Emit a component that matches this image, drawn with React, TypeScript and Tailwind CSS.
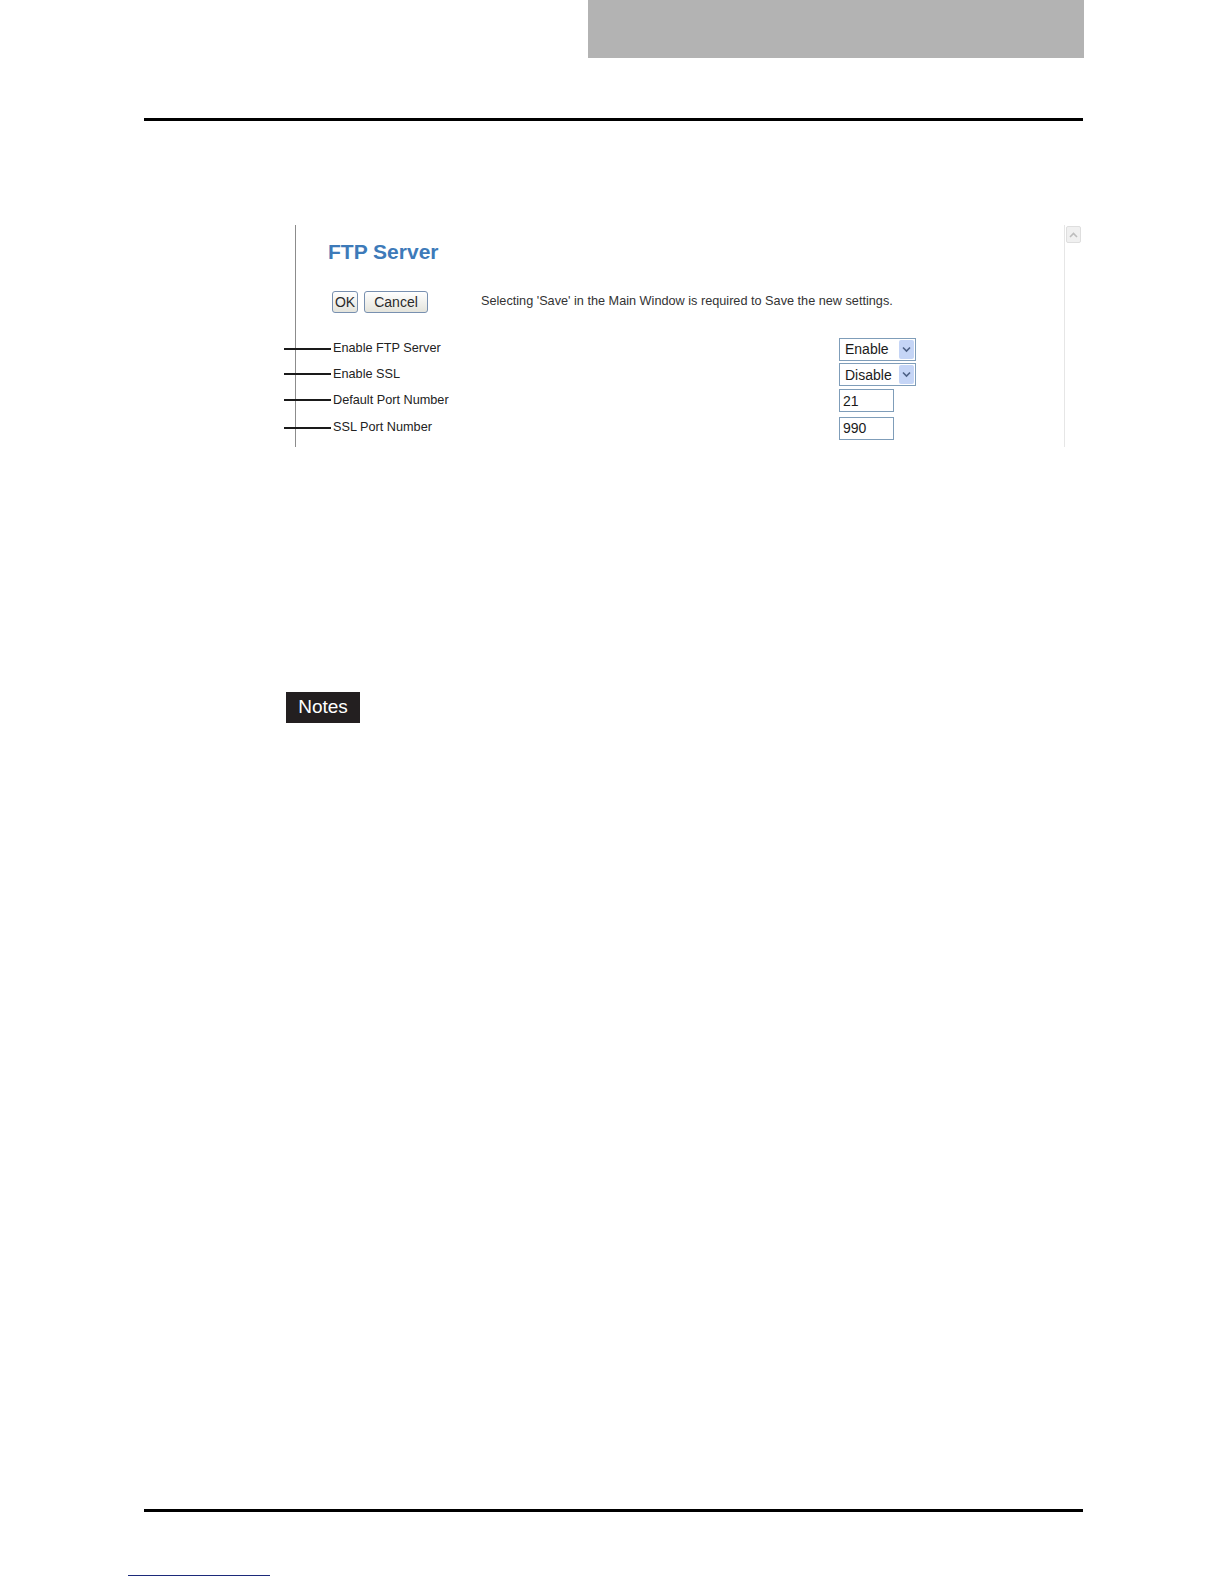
import React from 'react';

const font = { fontFamily: '"Liberation Sans", Arial, sans-serif' };

interface Row {
  label: string;
  h: string;
  kind: 'select' | 'input';
  value: string;
}

const rows: Row[] = [
  { label: 'Enable FTP Server', h: 'h-[26px]', kind: 'select', value: 'Enable' },
  { label: 'Enable SSL', h: 'h-[25px]', kind: 'select', value: 'Disable' },
  { label: 'Default Port Number', h: 'h-[27px]', kind: 'input', value: '21' },
  { label: 'SSL Port Number', h: 'h-[28px]', kind: 'input', value: '990' },
];

const SelectBox: React.FC<{ value: string }> = ({ value }) => (
  <div className="flex h-[23px] w-[77px] items-center border border-[#7f9db9] bg-white">
    <span className="flex-1 pl-[5px] text-[14px] leading-none text-[#1a1a1a]">{value}</span>
    <span className="mr-[1px] flex h-[19px] w-[15px] items-center justify-center rounded-[2px] bg-[#c5d5f6]">
      <svg width="9" height="7" viewBox="0 0 9 7">
        <path d="M1 1.5 L4.5 5 L8 1.5" fill="none" stroke="#4d6185" strokeWidth="1.6" />
      </svg>
    </span>
  </div>
);

const InputBox: React.FC<{ value: string }> = ({ value }) => (
  <div className="flex h-[23px] w-[55px] items-center border border-[#7f9db9] bg-white pl-[3px] text-[14px] leading-none text-[#1a1a1a]">
    {value}
  </div>
);

const FormButton: React.FC<{ children: React.ReactNode; w: string }> = ({ children, w }) => (
  <div
    className={`${w} flex h-[22px] items-center justify-center rounded-[3px] border border-[#7890b0] bg-gradient-to-b from-white to-[#e4e4dc] text-[14px] leading-none text-[#2a2a2a]`}
  >
    {children}
  </div>
);

export default function App() {
  return (
    <div className="h-[1584px] w-[1224px] overflow-hidden bg-white" style={font}>
      {/* header tab */}
      <div className="ml-[588px] h-[58px] w-[496px] bg-[#b3b3b3]" />
      <div className="ml-[144px] mt-[60px] h-[3px] w-[939px] bg-black" />

      {/* screenshot */}
      <div className="ml-[284px] mt-[104px]">
        <div className="ml-[11px] flex h-[222px] w-[787px] border-l border-[#8c8c8c]">
          <div className="flex-1">
            <div className="pl-[32px] pt-[15px] text-[21px] font-bold leading-[24px] text-[#3d7ab9]">
              FTP Server
            </div>
            <div className="mt-[27px] flex items-center pl-[36px]">
              <FormButton w="w-[26px]">OK</FormButton>
              <div className="ml-[6px]">
                <FormButton w="w-[64px]">Cancel</FormButton>
              </div>
              <span className="ml-[53px] text-[12.7px] text-[#333]">
                Selecting 'Save' in the Main Window is required to Save the new settings.
              </span>
            </div>
            <div className="mt-[23px]">
              {rows.map((r) => (
                <div key={r.label} className={`flex items-center ${r.h}`}>
                  <div className="-ml-[12px] flex w-[555px] items-center">
                    <div className="h-[2px] w-[47px] bg-[#1a1a1a]" />
                    <span className="ml-[2px] text-[12.7px] text-[#222]">{r.label}</span>
                  </div>
                  {r.kind === 'select' ? <SelectBox value={r.value} /> : <InputBox value={r.value} />}
                </div>
              ))}
            </div>
          </div>
          {/* scrollbar */}
          <div className="w-[18px] border-l border-[#e6e6e6] pt-[1px]">
            <div className="mx-[1px] flex h-[17px] items-center justify-center rounded-[2px] border border-[#dedede] bg-[#f0f0f0]">
              <svg width="9" height="6" viewBox="0 0 9 6">
                <path d="M1 5 L4.5 1.5 L8 5" fill="none" stroke="#bdbdbd" strokeWidth="1.6" />
              </svg>
            </div>
          </div>
        </div>
      </div>

      {/* notes label */}
      <div className="ml-[286px] mt-[245px] flex h-[31px] w-[74px] items-center justify-center bg-[#231f20] text-[19px] text-white">
        Notes
      </div>

      {/* footer */}
      <div className="ml-[144px] mt-[786px] h-[3px] w-[939px] bg-black" />
      <div className="ml-[128px] mt-[63px] h-[1px] w-[142px] bg-[#1c2a7a]" />
    </div>
  );
}
